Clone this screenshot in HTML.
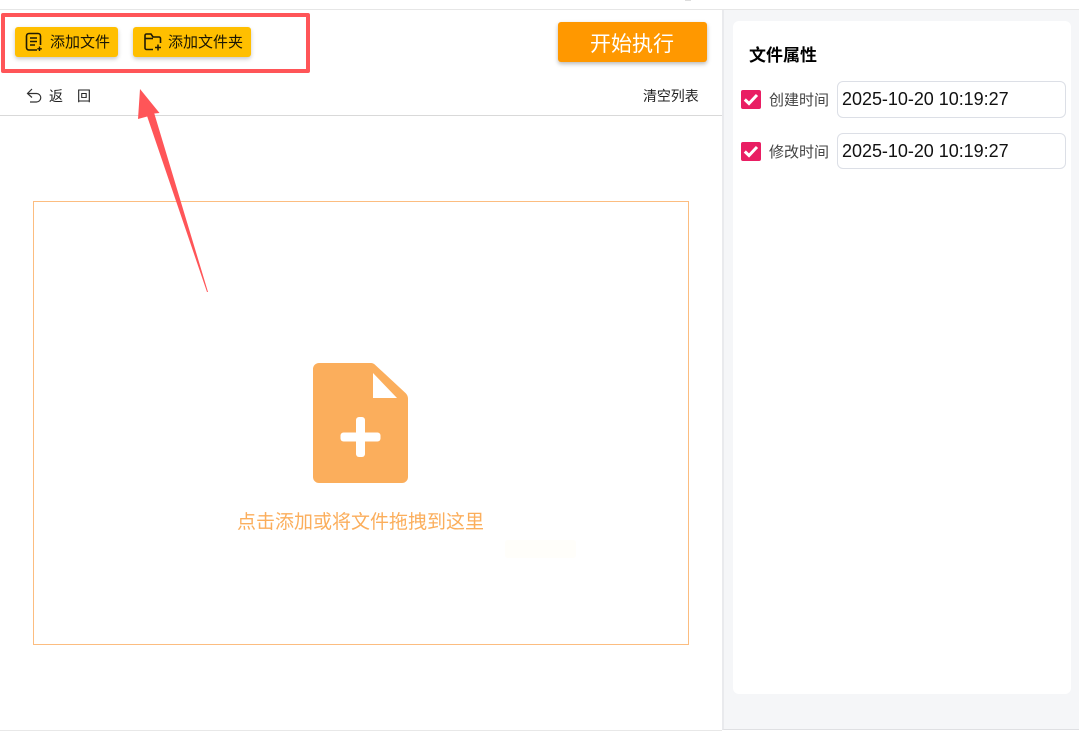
<!DOCTYPE html>
<html lang="zh-CN">
<head>
<meta charset="utf-8">
<title>文件属性</title>
<style>
html,body{margin:0;padding:0;background:#fff}
body{position:relative;width:1079px;height:737px;overflow:hidden;font-family:"Liberation Sans","Noto Sans CJK SC",sans-serif;color:#222}
.a{position:absolute;box-sizing:border-box}
.t{position:absolute;white-space:nowrap;line-height:1}
.btn{background:#ffbf00;border-radius:3px;box-shadow:0 2px 4px rgba(0,0,0,.22)}
.inp{background:#fff;border:1px solid #dcdfe6;border-radius:6px;font-size:18px;line-height:35px;padding-left:4px;color:#111;white-space:nowrap;letter-spacing:-.03px}
.cb{background:#e91e63;border-radius:2px}
</style>
</head>
<body>
<div class="a" style="left:0;top:9px;width:1079px;height:1px;background:#e6e6e6"></div>
<div class="a" style="left:685px;top:0;width:6px;height:1px;background:#bbb;opacity:.5"></div>

<!-- right panel -->
<div class="a" style="left:722px;top:10px;width:357px;height:720px;background:#f5f6f8;border-left:2px solid #e9eaed;border-bottom:1px solid #dfe0e3"></div>
<div class="a" style="left:733px;top:21px;width:338px;height:673px;background:#fff;border-radius:6px"></div>
<div class="t" style="left:749px;top:47px;font-size:17px;font-weight:700;color:#000">文件属性</div>

<div class="a cb" style="left:741px;top:90px;width:20px;height:19px"></div>
<svg class="a" style="left:741px;top:90px" width="20" height="19" viewBox="0 0 20 19"><path d="M3.800 9.500L8 13.500L16 5" fill="none" stroke="#fff" stroke-width="3"/></svg>
<div class="t" style="left:769px;top:93px;font-size:15px;color:#444">创建时间</div>
<div class="a inp" style="left:837px;top:81px;width:229px;height:37px">2025-10-20 10:19:27</div>

<div class="a cb" style="left:741px;top:142px;width:20px;height:19px"></div>
<svg class="a" style="left:741px;top:142px" width="20" height="19" viewBox="0 0 20 19"><path d="M3.800 9.500L8 13.500L16 5" fill="none" stroke="#fff" stroke-width="3"/></svg>
<div class="t" style="left:769px;top:145px;font-size:15px;color:#444">修改时间</div>
<div class="a inp" style="left:837px;top:133px;width:229px;height:36px">2025-10-20 10:19:27</div>

<!-- toolbar -->
<div class="a btn" style="left:15px;top:27px;width:103px;height:30px"></div>
<svg class="a" style="left:24px;top:32px" width="20" height="20" viewBox="0 0 20 20" fill="none" stroke="#1f1a05" stroke-width="1.600"><path d="M13 18H5a2.500 2.500 0 0 1-2.500-2.500V4A2.500 2.500 0 0 1 5 1.500h9A2.500 2.500 0 0 1 16.500 4v9"/><path d="M6 6h7M6 9.500h7M6 13h5"/><path d="M15.500 14.500v4.500M13.300 16.800h4.500" stroke-width="1.400"/></svg>
<div class="t" style="left:50px;top:35px;font-size:15px;color:#1a1604">添加文件</div>

<div class="a btn" style="left:133px;top:27px;width:118px;height:30px"></div>
<svg class="a" style="left:143px;top:32px" width="20" height="20" viewBox="0 0 20 20" fill="none" stroke="#1f1a05" stroke-width="1.600"><path d="M10 17.500H3.500a1.500 1.500 0 0 1-1.500-1.500V3.500A1.500 1.500 0 0 1 3.500 2H8l2 3h6a1.500 1.500 0 0 1 1.500 1.500V11"/><path d="M2 6.500h8"/><path d="M15 12.500v6M12 15.500h6" stroke-width="1.500"/></svg>
<div class="t" style="left:168px;top:35px;font-size:15px;color:#1a1604">添加文件夹</div>

<div class="a" style="left:558px;top:22px;width:148.500px;height:40px;background:#ff9800;border-radius:3px;box-shadow:0 2px 4px rgba(0,0,0,.28)"></div>
<div class="t" style="left:590px;top:34px;font-size:21px;color:#fff">开始执行</div>

<!-- red highlight -->
<div class="a" style="left:1px;top:13px;width:309px;height:60px;border:4px solid #ff5558;border-radius:2px"></div>

<!-- back row -->
<svg class="a" style="left:25px;top:87px" width="18" height="18" viewBox="0 0 18 18" fill="none" stroke="#333" stroke-width="1.200"><path d="M7 2L2.500 6.500L7 10.500"/><path d="M2.500 6.500H11.500a4 4 0 0 1 0 8.500H5"/></svg>
<div class="t" style="left:49px;top:89px;font-size:14px;letter-spacing:14px;color:#222">返回</div>
<div class="t" style="left:643px;top:89px;font-size:14px;color:#222;letter-spacing:-.1px">清空列表</div>
<div class="a" style="left:0;top:115px;width:722px;height:1px;background:#d9d9d9"></div>

<!-- dropzone -->
<div class="a" style="left:33px;top:201px;width:655.500px;height:444px;border:1px solid #fcbd80"></div>
<svg class="a" style="left:313px;top:363px" width="95" height="120" viewBox="0 0 95 120">
<path d="M6 0H58a6 6 0 0 1 4 1.700L92.500 30a8 8 0 0 1 2.500 6V114a6 6 0 0 1-6 6H6a6 6 0 0 1-6-6V6a6 6 0 0 1 6-6Z" fill="#fbae5c"/>
<path d="M60 10L84 35H60Z" fill="#fff"/>
<rect x="43" y="54" width="9" height="40" rx="3" fill="#fff"/>
<rect x="27.500" y="69.500" width="40" height="9" rx="3" fill="#fff"/>
</svg>
<div class="t" style="left:237px;top:513px;font-size:19px;color:#fbae5c">点击添加或将文件拖拽到这里</div>
<div class="a" style="left:505px;top:540px;width:71px;height:18px;background:#fffefa;border-radius:3px"></div>

<!-- arrow -->
<svg class="a" style="left:0;top:0" width="300" height="300" viewBox="0 0 300 300"><path d="M140 89L159.500 113L154.300 113.500L208 292L207 292L147.200 116.500L138 119Z" fill="#ff5558"/></svg>

<div class="a" style="left:0;top:730px;width:722px;height:1px;background:#e8e8e8"></div>
</body>
</html>
